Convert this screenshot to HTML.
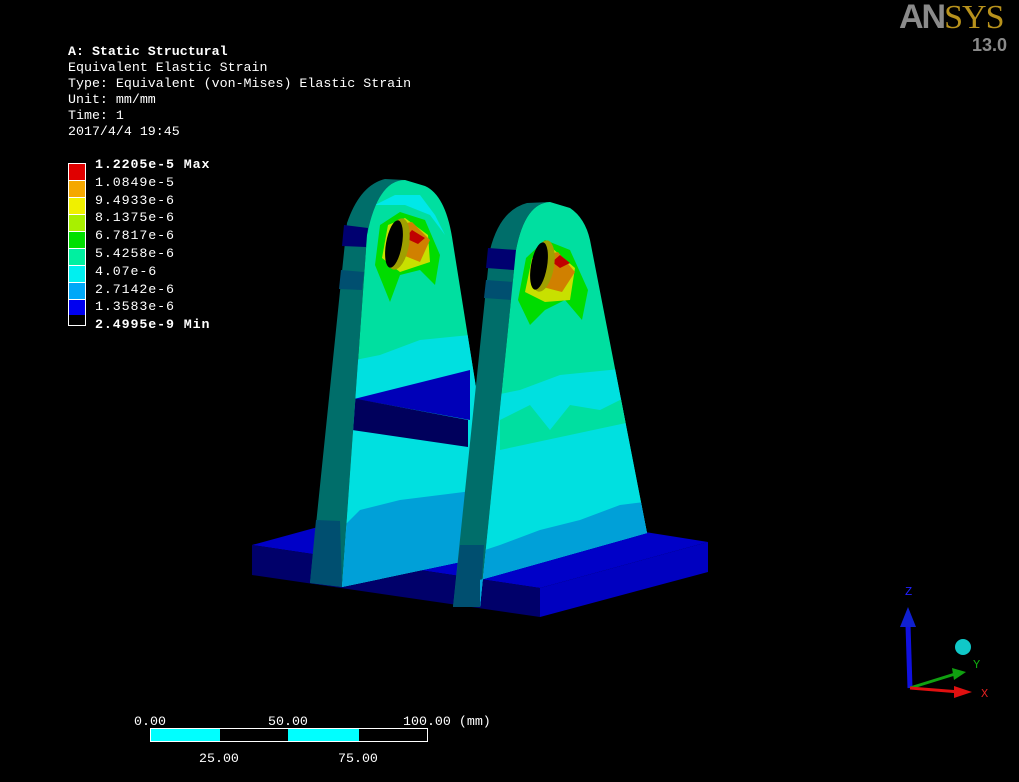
<!DOCTYPE html>
<html><head><meta charset="utf-8"><style>
html,body{margin:0;padding:0;background:#000;}
body{width:1019px;height:782px;position:relative;overflow:hidden;font-family:"Liberation Mono",monospace;color:#fff;}
.t{position:absolute;left:68px;font-size:13.3px;line-height:16px;white-space:pre;}
.lg{position:absolute;left:95px;font-size:13.3px;line-height:17.8px;white-space:pre;letter-spacing:0.9px;}
b{font-weight:bold;}
</style></head><body>
<div class="t" style="top:44px"><b>A: Static Structural</b>
Equivalent Elastic Strain
Type: Equivalent (von-Mises) Elastic Strain
Unit: mm/mm
Time: 1
2017/4/4 19:45</div>
<div style="position:absolute;left:68px;top:163px;width:16px;height:161px;border:1px solid #fff;">
<div style="height:16px;background:#e00000;border-bottom:1px solid #fff"></div>
<div style="height:16px;background:#f5a800;border-bottom:1px solid #fff"></div>
<div style="height:16px;background:#f0f000;border-bottom:1px solid #fff"></div>
<div style="height:16px;background:#a8f000;border-bottom:1px solid #fff"></div>
<div style="height:16px;background:#00e000;border-bottom:1px solid #fff"></div>
<div style="height:16px;background:#00f0a0;border-bottom:1px solid #fff"></div>
<div style="height:16px;background:#00f0f0;border-bottom:1px solid #fff"></div>
<div style="height:16px;background:#00a8f8;border-bottom:1px solid #fff"></div>
<div style="height:15px;background:#0000f0"></div>
</div>
<div class="lg" style="top:156px"><b>1.2205e-5 Max</b>
1.0849e-5
9.4933e-6
8.1375e-6
6.7817e-6
5.4258e-6
4.07e-6
2.7142e-6
1.3583e-6
<b>2.4995e-9 Min</b></div>
<div style="position:absolute;left:899px;top:-2px;font-family:'Liberation Sans',sans-serif;font-size:34px;font-weight:bold;letter-spacing:-2px;"><span style="color:#8a8a8a">AN</span><span style="color:#b8921c;font-family:'Liberation Serif',serif;font-weight:normal;letter-spacing:-1px">SYS</span></div>
<div style="position:absolute;left:972px;top:35px;font-family:'Liberation Sans',sans-serif;font-size:18px;font-weight:bold;color:#8a8a8a">13.0</div>

<svg width="1019" height="782" style="position:absolute;left:0;top:0">
<defs>
<clipPath id="f1"><path d="M342,587 L367,235 Q378,180 405,180 L425,186 Q445,195 452,237 L478,400 L470,560 Z"/></clipPath>
<clipPath id="f2"><path d="M480,607 L516,250 Q525,203 550,202 L570,208 Q585,218 590,240 L647,533 L480,580 Z"/></clipPath>
</defs>
<polygon points="252,545 318,527 645,532 708,542 540,588" fill="#0000c8"/>
<polygon points="252,545 540,588 540,617 252,575" fill="#00006a"/>
<polygon points="540,588 708,542 708,572 540,617" fill="#0000c0"/>
<path d="M310,583 L347,223 Q360,185 385,179 L405,180 Q378,185 367,235 L342,587 Z" fill="#006e6a"/>
<polygon points="344,225 368,228 366,247 342,246" fill="#000070"/>
<polygon points="341,270 364,272 362,290 339,289" fill="#004f70"/>
<polygon points="316,520 340,521 342,587 310,583" fill="#004f70"/>
<g clip-path="url(#f1)">
<rect x="330" y="170" width="160" height="440" fill="#00dfa0"/>
<path d="M330,365 L380,355 L420,340 L470,335 L480,340 L480,620 L330,620 Z" fill="#00e0e0"/>
<path d="M330,540 L360,510 L400,500 L440,495 L480,490 L480,620 L330,620Z" fill="#00a0d8"/>
<path d="M375,205 L395,195 L420,195 L435,215 L445,235 L430,215 L405,205Z" fill="#00e8e8"/>
<path d="M375,265 L380,225 L400,212 L425,220 L440,255 L435,285 L420,270 L400,275 L390,302Z" fill="#00dc00"/>
<path d="M382,258 L388,225 L405,218 L428,235 L430,262 L400,272Z" fill="#c8e000"/>
<path d="M390,250 L395,225 L412,222 L430,240 L420,262Z" fill="#d08000"/>
<path d="M405,238 L412,230 L425,238 L418,244Z" fill="#c00000"/>
<polygon points="350,400 470,370 470,420 350,398" fill="#0000b8"/>
<polygon points="352,398 468,420 468,447 352,430" fill="#00005c"/>
</g>
<ellipse cx="398" cy="244" rx="11" ry="26" fill="#a0a000" transform="rotate(10 398 244)"/>
<ellipse cx="394" cy="244" rx="8" ry="24" fill="#000" transform="rotate(10 394 244)"/>
<path d="M453,607 L490,250 Q500,210 527,203 L550,202 Q525,203 516,250 L480,607 Z" fill="#006e6a"/>
<polygon points="488,248 517,250 514,270 486,268" fill="#000070"/>
<polygon points="486,280 514,282 512,300 484,298" fill="#004f70"/>
<polygon points="460,545 484,545 480,607 453,607" fill="#004f70"/>
<g clip-path="url(#f2)">
<rect x="470" y="195" width="190" height="420" fill="#00dfa0"/>
<path d="M470,400 L520,390 L560,375 L610,370 L660,365 L660,620 L470,620Z" fill="#00e0e0"/>
<path d="M500,420 L530,405 L550,430 L570,405 L600,410 L620,400 L640,395 L640,420 L500,450Z" fill="#00dfa0"/>
<path d="M470,555 L500,545 L540,530 L580,520 L620,505 L660,500 L660,620 L470,620Z" fill="#00a0d8"/>
<path d="M518,300 L526,258 L545,240 L570,250 L588,290 L582,320 L565,300 L545,310 L530,325Z" fill="#00dc00"/>
<path d="M525,292 L532,258 L552,248 L575,268 L570,300 L545,302Z" fill="#c8e000"/>
<path d="M535,285 L540,256 L558,252 L575,272 L562,292Z" fill="#d08000"/>
<path d="M552,262 L560,255 L570,263 L560,268Z" fill="#c00000"/>
</g>
<ellipse cx="543" cy="266" rx="11" ry="26" fill="#a0a000" transform="rotate(10 543 266)"/>
<ellipse cx="539" cy="266" rx="8" ry="24" fill="#000" transform="rotate(10 539 266)"/>
<line x1="910" y1="688" x2="908" y2="625" stroke="#1010e0" stroke-width="5"/>
<polygon points="900,627 916,627 908,607" fill="#1020d0"/>
<line x1="910" y1="688" x2="955" y2="674" stroke="#10a010" stroke-width="3"/>
<polygon points="952,668 966,672 954,680" fill="#10a010"/>
<line x1="910" y1="688" x2="960" y2="692" stroke="#e01010" stroke-width="3"/>
<polygon points="954,686 972,692 954,698" fill="#e01010"/>
<circle cx="963" cy="647" r="8" fill="#10c8c8"/>
<text x="905" y="595" fill="#2020ff" font-size="12" font-family="Liberation Mono">Z</text>
<text x="973" y="668" fill="#10b010" font-size="12" font-family="Liberation Mono">Y</text>
<text x="981" y="697" fill="#e02020" font-size="12" font-family="Liberation Mono">X</text>
<rect x="150.5" y="728.5" width="277" height="13" fill="#000" stroke="#fff"/>
<rect x="151" y="729" width="69" height="12" fill="#00ffff"/>
<rect x="288" y="729" width="71" height="12" fill="#00ffff"/>
<g fill="#fff" font-size="13.3" font-family="Liberation Mono">
<text x="134" y="725">0.00</text>
<text x="268" y="725">50.00</text>
<text x="403" y="725">100.00 (mm)</text>
<text x="199" y="762">25.00</text>
<text x="338" y="762">75.00</text>
</g>
</svg>
</body></html>
